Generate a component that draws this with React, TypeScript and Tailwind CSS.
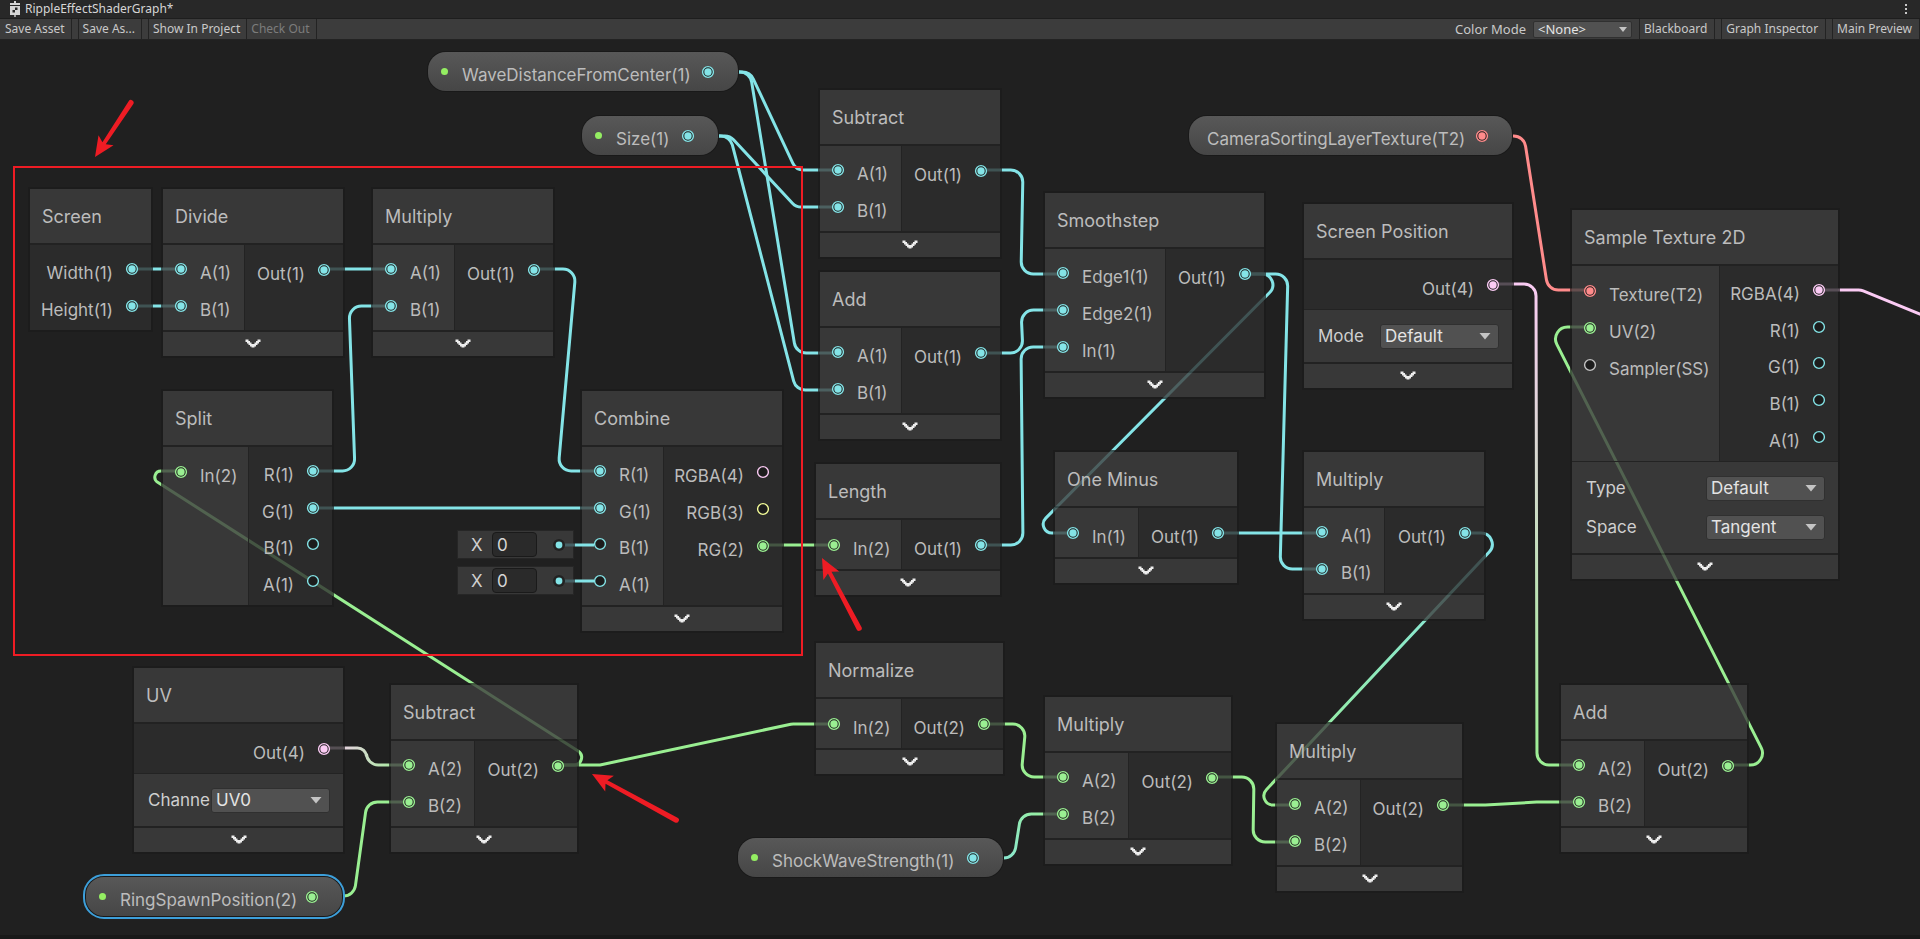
import React, { useId } from "react";

type Kind = "float" | "vec2" | "vec3" | "vec4" | "texture" | "sampler";
type Point = [number, number];

const COLORS: Record<Kind, string> = {
  float: "#84e4e7",
  vec2: "#9aef92",
  vec3: "#f6ff9a",
  vec4: "#fbcbf4",
  texture: "#ff8b8b",
  sampler: "#c4c4c4",
};

interface PortSpec {
  label: string;
  kind: Kind;
  on?: boolean;
}

interface FieldSpec {
  label: string;
  value: string;
}

interface NodeSpec {
  title: string;
  place: string;
  bodyHeight: string;
  inputWidth?: string;
  inputs?: PortSpec[];
  outputs: PortSpec[];
  fields?: FieldSpec[];
  fieldsClass?: string;
  foldable?: boolean;
}

const p = (label: string, kind: Kind, on = true): PortSpec => ({ label, kind, on });

const NODES: NodeSpec[] = [
  {
    title: "Screen",
    place: "left-[30px] top-[149px] w-[121px]",
    bodyHeight: "h-[85px]",
    outputs: [p("Width(1)", "float"), p("Height(1)", "float")],
    foldable: false,
  },
  {
    title: "Divide",
    place: "left-[163px] top-[149px] w-[180px]",
    bodyHeight: "h-[85px]",
    inputWidth: "w-[82px]",
    inputs: [p("A(1)", "float"), p("B(1)", "float")],
    outputs: [p("Out(1)", "float")],
  },
  {
    title: "Multiply",
    place: "left-[373px] top-[149px] w-[180px]",
    bodyHeight: "h-[85px]",
    inputWidth: "w-[82px]",
    inputs: [p("A(1)", "float"), p("B(1)", "float")],
    outputs: [p("Out(1)", "float")],
  },
  {
    title: "Split",
    place: "left-[163px] top-[351px] w-[169px]",
    bodyHeight: "h-[158px]",
    inputWidth: "w-[86px]",
    inputs: [p("In(2)", "vec2")],
    outputs: [p("R(1)", "float"), p("G(1)", "float"), p("B(1)", "float", false), p("A(1)", "float", false)],
    foldable: false,
  },
  {
    title: "Combine",
    place: "left-[582px] top-[351px] w-[200px]",
    bodyHeight: "h-[158px]",
    inputWidth: "w-[82px]",
    inputs: [p("R(1)", "float"), p("G(1)", "float"), p("B(1)", "float", false), p("A(1)", "float", false)],
    outputs: [p("RGBA(4)", "vec4", false), p("RGB(3)", "vec3", false), p("RG(2)", "vec2")],
  },
  {
    title: "Subtract",
    place: "left-[820px] top-[50px] w-[180px]",
    bodyHeight: "h-[85px]",
    inputWidth: "w-[82px]",
    inputs: [p("A(1)", "float"), p("B(1)", "float")],
    outputs: [p("Out(1)", "float")],
  },
  {
    title: "Add",
    place: "left-[820px] top-[232px] w-[180px]",
    bodyHeight: "h-[85px]",
    inputWidth: "w-[82px]",
    inputs: [p("A(1)", "float"), p("B(1)", "float")],
    outputs: [p("Out(1)", "float")],
  },
  {
    title: "Length",
    place: "left-[816px] top-[424px] w-[184px]",
    bodyHeight: "h-[49px]",
    inputWidth: "w-[86px]",
    inputs: [p("In(2)", "vec2")],
    outputs: [p("Out(1)", "float")],
  },
  {
    title: "Normalize",
    place: "left-[816px] top-[603px] w-[187px]",
    bodyHeight: "h-[49px]",
    inputWidth: "w-[86px]",
    inputs: [p("In(2)", "vec2")],
    outputs: [p("Out(2)", "vec2")],
  },
  {
    title: "Smoothstep",
    place: "left-[1045px] top-[153px] w-[219px]",
    bodyHeight: "h-[122px]",
    inputWidth: "w-[121px]",
    inputs: [p("Edge1(1)", "float"), p("Edge2(1)", "float"), p("In(1)", "float")],
    outputs: [p("Out(1)", "float")],
  },
  {
    title: "Screen Position",
    place: "left-[1304px] top-[164px] w-[208px]",
    bodyHeight: "h-[49px]",
    outputs: [p("Out(4)", "vec4")],
    fields: [{ label: "Mode", value: "Default" }],
    fieldsClass: "h-[53px]",
  },
  {
    title: "Sample Texture 2D",
    place: "left-[1572px] top-[170px] w-[266px]",
    bodyHeight: "h-[195px]",
    inputWidth: "w-[148px]",
    inputs: [p("Texture(T2)", "texture"), p("UV(2)", "vec2"), p("Sampler(SS)", "sampler", false)],
    outputs: [
      p("RGBA(4)", "vec4"),
      p("R(1)", "float", false),
      p("G(1)", "float", false),
      p("B(1)", "float", false),
      p("A(1)", "float", false),
    ],
    fields: [
      { label: "Type", value: "Default" },
      { label: "Space", value: "Tangent" },
    ],
    fieldsClass: "h-[92px]",
  },
  {
    title: "One Minus",
    place: "left-[1055px] top-[412px] w-[182px]",
    bodyHeight: "h-[49px]",
    inputWidth: "w-[84px]",
    inputs: [p("In(1)", "float")],
    outputs: [p("Out(1)", "float")],
  },
  {
    title: "Multiply",
    place: "left-[1304px] top-[412px] w-[180px]",
    bodyHeight: "h-[85px]",
    inputWidth: "w-[81px]",
    inputs: [p("A(1)", "float"), p("B(1)", "float")],
    outputs: [p("Out(1)", "float")],
  },
  {
    title: "UV",
    place: "left-[134px] top-[628px] w-[209px]",
    bodyHeight: "h-[49px]",
    outputs: [p("Out(4)", "vec4")],
    fields: [{ label: "Channe", value: "UV0" }],
    fieldsClass: "h-[53px]",
  },
  {
    title: "Subtract",
    place: "left-[391px] top-[645px] w-[186px]",
    bodyHeight: "h-[85px]",
    inputWidth: "w-[84px]",
    inputs: [p("A(2)", "vec2"), p("B(2)", "vec2")],
    outputs: [p("Out(2)", "vec2")],
  },
  {
    title: "Multiply",
    place: "left-[1045px] top-[657px] w-[186px]",
    bodyHeight: "h-[85px]",
    inputWidth: "w-[84px]",
    inputs: [p("A(2)", "vec2"), p("B(2)", "vec2")],
    outputs: [p("Out(2)", "vec2")],
  },
  {
    title: "Multiply",
    place: "left-[1277px] top-[684px] w-[185px]",
    bodyHeight: "h-[85px]",
    inputWidth: "w-[84px]",
    inputs: [p("A(2)", "vec2"), p("B(2)", "vec2")],
    outputs: [p("Out(2)", "vec2")],
  },
  {
    title: "Add",
    place: "left-[1561px] top-[645px] w-[186px]",
    bodyHeight: "h-[85px]",
    inputWidth: "w-[84px]",
    inputs: [p("A(2)", "vec2"), p("B(2)", "vec2")],
    outputs: [p("Out(2)", "vec2")],
  },
];

interface PropertySpec {
  label: string;
  kind: Kind;
  place: string;
  exposed?: boolean;
  selected?: boolean;
}

const PROPERTIES: PropertySpec[] = [
  { label: "WaveDistanceFromCenter(1)", kind: "float", place: "left-[428px] top-[12px] w-[310px]", exposed: true },
  { label: "Size(1)", kind: "float", place: "left-[582px] top-[76px] w-[136px]", exposed: true },
  { label: "CameraSortingLayerTexture(T2)", kind: "texture", place: "left-[1189px] top-[76px] w-[323px]" },
  { label: "ShockWaveStrength(1)", kind: "float", place: "left-[738px] top-[798px] w-[265px]", exposed: true },
  { label: "RingSpawnPosition(2)", kind: "vec2", place: "left-[86px] top-[837px] w-[256px]", exposed: true, selected: true },
];

interface EdgeSpec {
  from: Point;
  to: Point;
  kinds: [Kind, Kind];
}

const e = (x1: number, y1: number, x2: number, y2: number, a: Kind, b: Kind = a): EdgeSpec => ({
  from: [x1, y1],
  to: [x2, y2],
  kinds: [a, b],
});

const EDGES: EdgeSpec[] = [
  e(133, 229, 181, 229, "float"),
  e(133, 266, 181, 266, "float"),
  e(324, 229, 391, 229, "float"),
  e(534, 229, 600, 431, "float"),
  e(313, 431, 391, 266, "float"),
  e(313, 468, 600, 468, "float"),
  e(708, 32, 838, 130, "float"),
  e(708, 32, 838, 313, "float"),
  e(688, 96, 838, 167, "float"),
  e(688, 96, 838, 350, "float"),
  e(981, 130, 1063, 234, "float"),
  e(981, 313, 1063, 270, "float"),
  e(981, 505, 1063, 307, "float"),
  e(764, 505, 834, 505, "vec2"),
  e(1246, 234, 1073, 493, "float"),
  e(1246, 234, 1322, 529, "float"),
  e(1218, 493, 1322, 493, "float"),
  e(1465, 493, 1294, 765, "float", "vec2"),
  e(1482, 96, 1590, 250, "texture"),
  e(1494, 244, 1579, 725, "vec4", "vec2"),
  e(1728, 725, 1590, 287, "vec2"),
  e(1819, 250, 2008, 293, "vec4"),
  e(558, 725, 182, 431, "vec2"),
  e(558, 725, 834, 684, "vec2"),
  e(984, 684, 1063, 737, "vec2"),
  e(972, 818, 1063, 774, "float", "vec2"),
  e(1212, 737, 1295, 802, "vec2"),
  e(1443, 765, 1579, 762, "vec2"),
  e(324, 708, 409, 725, "vec4", "vec2"),
  e(312, 856, 409, 762, "vec2"),
];

const STUB = 42;
const RADIUS = 12;
const MAX_TANGENT = 26;

function roundedPath(points: Point[]): string {
  let d = `M${points[0][0]} ${points[0][1]}`;
  for (let i = 1; i < points.length - 1; i++) {
    const [a, b, c] = [points[i - 1], points[i], points[i + 1]];
    const u: Point = [a[0] - b[0], a[1] - b[1]];
    const v: Point = [c[0] - b[0], c[1] - b[1]];
    const lu = Math.hypot(u[0], u[1]);
    const lv = Math.hypot(v[0], v[1]);
    const cos = (u[0] * v[0] + u[1] * v[1]) / (lu * lv);
    const half = Math.acos(Math.max(-1, Math.min(1, cos))) / 2;
    const t = Math.min(RADIUS / Math.tan(half), MAX_TANGENT, lu / 2 + 5, lv / 2);
    const r = t * Math.tan(half);
    const sweep = u[0] * v[1] - u[1] * v[0] < 0 ? 1 : 0;
    const s: Point = [b[0] + (u[0] / lu) * t, b[1] + (u[1] / lu) * t];
    const f: Point = [b[0] + (v[0] / lv) * t, b[1] + (v[1] / lv) * t];
    d += ` L${s[0]} ${s[1]} A${r} ${r} 0 0 ${sweep} ${f[0]} ${f[1]}`;
  }
  const last = points[points.length - 1];
  return `${d} L${last[0]} ${last[1]}`;
}

function edgePath({ from, to }: EdgeSpec): string {
  if (from[1] === to[1]) return `M${from[0]} ${from[1]} L${to[0]} ${to[1]}`;
  return roundedPath([from, [from[0] + STUB, from[1]], [to[0] - STUB, to[1]], to]);
}

function Edges() {
  return (
    <svg className="absolute top-0 left-0 overflow-visible" width="1920" height="895" aria-hidden="true">
      <defs>
        {EDGES.map((edge, i) =>
          edge.kinds[0] !== edge.kinds[1] ? (
            <linearGradient
              key={i}
              id={`edge-${i}`}
              gradientUnits="userSpaceOnUse"
              x1={edge.from[0]}
              y1={edge.from[1]}
              x2={edge.to[0]}
              y2={edge.to[1]}
            >
              <stop offset="0" stopColor={COLORS[edge.kinds[0]]} />
              <stop offset="1" stopColor={COLORS[edge.kinds[1]]} />
            </linearGradient>
          ) : null,
        )}
      </defs>
      {EDGES.map((edge, i) => (
        <path
          key={i}
          d={edgePath(edge)}
          fill="none"
          strokeWidth="3"
          stroke={edge.kinds[0] !== edge.kinds[1] ? `url(#edge-${i})` : COLORS[edge.kinds[0]]}
        />
      ))}
    </svg>
  );
}

function Port({ kind, on }: { kind: Kind; on?: boolean }) {
  return (
    <svg className="relative z-10 shrink-0" width="14" height="14" viewBox="0 0 14 14" aria-hidden="true">
      <circle cx="7" cy="7" r="5.4" fill="#1c1c1c" stroke={COLORS[kind]} strokeWidth="1.4" />
      {on && <circle cx="7" cy="7" r="3.7" fill={COLORS[kind]} />}
    </svg>
  );
}

function Select({ id, value, options }: { id: string; value: string; options: string[] }) {
  return (
    <span className="relative flex w-[119px] shrink-0">
      <select
        id={id}
        defaultValue={value}
        className="h-[25px] w-full appearance-none rounded-[3px] border border-[#303030] bg-[#515151] pl-1 text-[17px] leading-5 text-[#e4e4e4]"
      >
        {options.map((o) => (
          <option key={o}>{o}</option>
        ))}
      </select>
      <svg className="pointer-events-none absolute top-[9px] right-2" width="12" height="7" aria-hidden="true">
        <path d="M0.5 0h11L6 6.5z" fill="#c4c4c4" />
      </svg>
    </span>
  );
}

const OPTIONS: Record<string, string[]> = {
  Mode: ["Default", "Raw", "Center", "Tiled"],
  Type: ["Default", "Normal"],
  Space: ["Tangent", "Object"],
  Channe: ["UV0", "UV1", "UV2", "UV3"],
};

function Field({ field }: { field: FieldSpec }) {
  const id = useId();
  return (
    <div className="flex items-center justify-between pr-[13px] pl-[14px]">
      <label htmlFor={id}>{field.label}</label>
      <Select id={id} value={field.value} options={OPTIONS[field.label]} />
    </div>
  );
}

function GraphNode({ node }: { node: NodeSpec }) {
  const { title, place, bodyHeight, inputWidth, inputs, outputs, fields, fieldsClass, foldable = true } = node;
  return (
    <section className={`absolute flex flex-col shadow-[0_0_0_2px_rgba(27,27,27,0.7)] ${place}`}>
      <h2 className="flex h-[54px] items-center bg-[#3f3f3f]/80 pt-[2px] pl-3 text-lg">{title}</h2>
      <div className="h-[2px] bg-[#232323]/80" />
      <div className={`flex ${bodyHeight}`}>
        {inputs && (
          <ul className={`flex shrink-0 flex-col border-r border-[#232323] bg-[#3f3f3f]/80 py-[6px] ${inputWidth}`}>
            {inputs.map((port, i) => (
              <li key={i} className="flex h-[37px] shrink items-center gap-3 pl-[11px]">
                <Port {...port} />
                <span className="pt-2">{port.label}</span>
              </li>
            ))}
          </ul>
        )}
        <ul className="flex flex-1 flex-col bg-[#2e2e2e]/80 py-[6px]">
          {outputs.map((port, i) => (
            <li key={i} className="flex h-[37px] shrink items-center justify-end gap-3 pr-3">
              <span className="pt-2">{port.label}</span>
              <Port {...port} />
            </li>
          ))}
        </ul>
      </div>
      {fields && (
        <div
          className={`flex flex-col justify-center gap-[14px] border-t border-[#232323] bg-[#3f3f3f]/80 text-[#cfcfcf] ${fieldsClass}`}
        >
          {fields.map((field) => (
            <Field key={field.label} field={field} />
          ))}
        </div>
      )}
      {foldable && (
        <>
          <div className="h-[2px] bg-[#232323]/80" />
          <button type="button" aria-label="Collapse" className="flex h-6 items-center justify-center bg-[#3f3f3f]/80">
            <svg width="16" height="10" viewBox="0 0 16 10" aria-hidden="true">
              <path
                d="M0.5 0.5h3v1.5h1.5v1.5h1.5v1.5h3v-1.5h1.5v-1.5h1.5v-1.5h3v2.5h-1.5v1.5h-1.5v1.5h-1.5v1.5h-1.5v1h-3v-1h-1.5v-1.5h-1.5v-1.5h-1.5v-1.5h-1.5z"
                fill="#ededed"
              />
            </svg>
          </button>
        </>
      )}
    </section>
  );
}

function PropertyPill({ item }: { item: PropertySpec }) {
  return (
    <div
      className={`absolute flex h-[39px] items-center justify-between rounded-[18px] bg-linear-to-b from-[#585858] to-[#464646] pr-[23px] ring-1 ring-[#191919] ${item.place} ${
        item.selected ? "outline-2 outline-offset-1 outline-[#3d9fda]" : ""
      } ${item.exposed ? "pl-[13px]" : "pl-[18px]"}`}
    >
      <span className="flex items-center gap-[14px]">
        {item.exposed && <span className="size-[7px] shrink-0 rounded-full bg-[#94ee62]" />}
        <span className="pt-[6px]">{item.label}</span>
      </span>
      <Port kind={item.kind} on />
    </div>
  );
}

function InlineInput({ place, name }: { place: string; name: string }) {
  return (
    <div className={`absolute flex h-[29px] w-[117px] items-center border border-[#262626] bg-[#3f3f3f]/80 pl-[13px] ${place}`}>
      <label htmlFor={name} className="w-[21px] text-[#cfcfcf]">
        X
      </label>
      <input
        id={name}
        defaultValue="0"
        className="h-[25px] w-[45px] rounded-[4px] border border-[#1a1a1a] bg-[#2a2a2a] pl-1 text-[#d6d6d6]"
      />
      <svg className="absolute top-[7px] left-[94px] overflow-visible" width="36" height="14" aria-hidden="true">
        <path d="M8 7h15" stroke="#466064" strokeWidth="3" />
        <path d="M23 7h19" stroke={COLORS.float} strokeWidth="3" />
        <circle cx="7" cy="7" r="6" fill="#222222" />
        <circle cx="7" cy="7" r="3.4" fill={COLORS.float} />
      </svg>
    </div>
  );
}

function Arrow({ tip, tail }: { tip: Point; tail: Point }) {
  const dx = tail[0] - tip[0];
  const dy = tail[1] - tip[1];
  const len = Math.hypot(dx, dy);
  const deg = (Math.atan2(dy, dx) * 180) / Math.PI;
  return (
    <g transform={`translate(${tip[0]} ${tip[1]}) rotate(${deg})`} fill="#ee1c24">
      <path d={`M0 0 L20 -9 L16.5 -2 L${len - 2} -2.7 A2.7 2.7 0 0 1 ${len - 2} 2.7 L16.5 2 L20 9 Z`} />
    </g>
  );
}

function ToolbarButton({
  children,
  muted,
  padding = "pl-1 pr-[6px]",
}: {
  children: React.ReactNode;
  muted?: boolean;
  padding?: string;
}) {
  return (
    <button
      type="button"
      className={`h-5 border-r border-[#232323] whitespace-nowrap ${padding} ${muted ? "text-[#7c7c7c]" : ""}`}
    >
      {children}
    </button>
  );
}

function Spacer() {
  return <span className="h-5 w-[7px] border-r border-[#232323]" />;
}

function Header() {
  return (
    <header className="font-['Noto_Sans',sans-serif] text-xs text-[#c9c9c9]">
      <div className="flex h-[19px] items-center justify-between border-b border-[#1e1e1e] bg-[#282828] pr-3 pl-[9px]">
        <h1 className="flex items-center gap-1 text-[#d6d6d6]">
          <svg width="12" height="16" viewBox="0 0 12 16" aria-hidden="true">
            <path d="M5 0h2v2h4v2H1V2h4z" fill="#d6d6d6" />
            <rect x="1" y="5" width="10" height="9" fill="#d6d6d6" />
            <path d="M6 6.500h2.500v2.500H6zM3.500 9h2.500v2.500H3.500z" fill="#282828" />
            <path d="M5 14h2v2H5z" fill="#a0a0a0" />
          </svg>
          RippleEffectShaderGraph*
        </h1>
        <button type="button" aria-label="More">
          <svg width="4" height="12" aria-hidden="true">
            <path d="M1 1h2v2H1zM1 5h2v2H1zM1 9h2v2H1z" fill="#c9c9c9" />
          </svg>
        </button>
      </div>
      <div className="flex h-[21px] items-center justify-between border-b border-[#232323] bg-[#3c3c3c] pl-px">
        <div className="flex items-center">
          <ToolbarButton>Save Asset</ToolbarButton>
          <Spacer />
          <ToolbarButton>Save As...</ToolbarButton>
          <Spacer />
          <ToolbarButton>Show In Project</ToolbarButton>
          <ToolbarButton muted>Check Out</ToolbarButton>
        </div>
        <div className="flex items-center">
          <label htmlFor="color-mode" className="pr-[7px] text-[13px] leading-4">
            Color Mode
          </label>
          <span className="relative flex">
            <select
              id="color-mode"
              defaultValue="<None>"
              className="h-[17px] w-[99px] appearance-none rounded-[2px] border border-[#303030] bg-[#515151] pl-1 text-[13px] leading-[15px] text-[#e4e4e4]"
            >
              <option>{"<None>"}</option>
              <option>Category</option>
              <option>Precision</option>
            </select>
            <svg className="pointer-events-none absolute top-[6px] right-[5px]" width="8" height="5" aria-hidden="true">
              <path d="M0 0h8L4 5z" fill="#c4c4c4" />
            </svg>
          </span>
          <span className="h-5 w-2 border-r border-[#232323]" />
          <ToolbarButton padding="pl-1 pr-[7px]">Blackboard</ToolbarButton>
          <Spacer />
          <ToolbarButton padding="pl-1 pr-[7px]">Graph Inspector</ToolbarButton>
          <Spacer />
          <ToolbarButton padding="pl-1 pr-[7px]">Main Preview</ToolbarButton>
        </div>
      </div>
    </header>
  );
}

export default function App() {
  return (
    <div className="flex min-h-screen flex-col bg-[#202020]">
      <Header />
      <main className="relative flex-1 overflow-hidden font-['Inter',sans-serif] text-[17px] leading-5 text-[#bcbcbc]">
        <Edges />
        {NODES.map((node, i) => (
          <GraphNode key={i} node={node} />
        ))}
        {PROPERTIES.map((item) => (
          <PropertyPill key={item.label} item={item} />
        ))}
        <InlineInput name="combine-b" place="left-[457px] top-[490px]" />
        <InlineInput name="combine-a" place="left-[457px] top-[526px]" />
        <div className="pointer-events-none absolute top-[126px] left-[13px] h-[490px] w-[790px] border-2 border-[#ee1c24]" />
        <svg className="pointer-events-none absolute top-0 left-0 overflow-visible" width="1920" height="895" aria-hidden="true">
          <Arrow tip={[95, 117]} tail={[132, 61]} />
          <Arrow tip={[822, 518]} tail={[860, 590]} />
          <Arrow tip={[592, 734]} tail={[678, 781]} />
        </svg>
      </main>
      <div className="h-1 bg-[#191919]" />
    </div>
  );
}
